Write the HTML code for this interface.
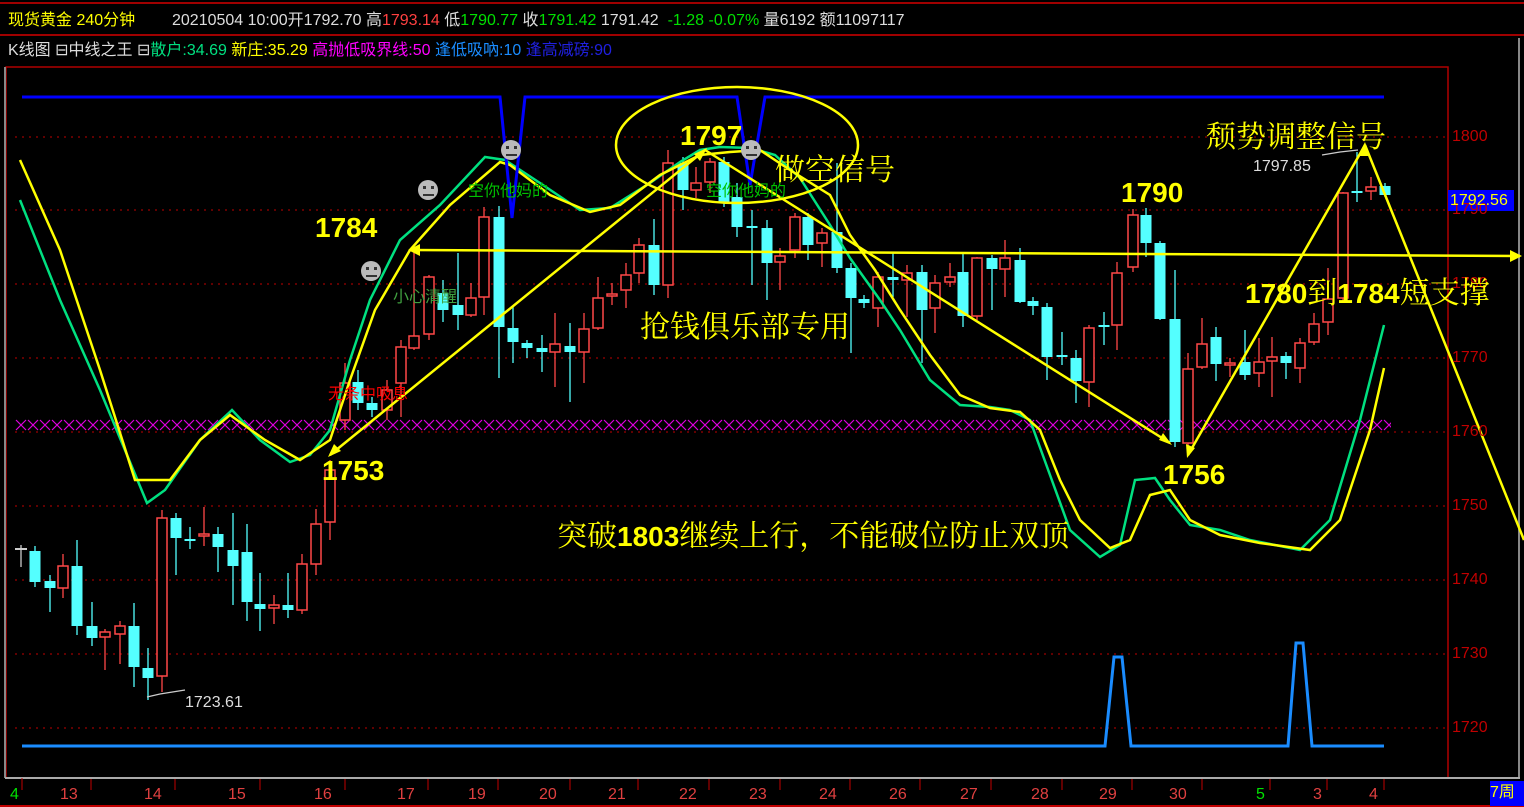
<!DOCTYPE html>
<html><head><meta charset="utf-8">
<style>
html,body{margin:0;padding:0;background:#000;}
body{width:1524px;height:807px;overflow:hidden;position:relative;font-family:"Liberation Sans","Noto Sans CJK SC",sans-serif;}
.h{position:absolute;font-size:16px;white-space:nowrap;line-height:18px;}
svg{position:absolute;left:0;top:0;}
.t{position:absolute;white-space:nowrap;color:#ffff00;}
.b{font-weight:bold;font-size:28px;font-family:"Liberation Sans",sans-serif;}
.s{font-size:30px;font-family:"Liberation Serif","Noto Serif CJK SC",serif;}
</style></head><body>
<svg width="1524" height="807" id="sv">
<rect x="0" y="0" width="1524" height="807" fill="#000"/>
<line x1="0" y1="3" x2="1524" y2="3" stroke="#a00000" stroke-width="2"/>
<line x1="0" y1="35" x2="1524" y2="35" stroke="#a00000" stroke-width="2"/>
<rect x="6" y="67" width="1442" height="711" fill="none" stroke="#b00000" stroke-width="1.5"/>
<line x1="5" y1="67" x2="5" y2="778" stroke="#888" stroke-width="2"/>
<line x1="1519" y1="38" x2="1519" y2="778" stroke="#888" stroke-width="2"/>
<line x1="5" y1="778" x2="1520" y2="778" stroke="#aaa" stroke-width="2"/>
<line x1="0" y1="806" x2="1524" y2="806" stroke="#c00000" stroke-width="2"/>
<g id="grid" stroke="#9a0000" stroke-width="1.3" stroke-dasharray="2,5"></g>
<defs><pattern id="xp" x="15" y="419" width="12" height="12" patternUnits="userSpaceOnUse"><path d="M1,1 L11,11 M11,1 L1,11" stroke="#e000e0" stroke-width="1.2"/></pattern></defs>
<rect x="15" y="419" width="1376" height="12" fill="url(#xp)"/>
<g id="cdl"></g>
<polyline fill="none" stroke="#00e080" stroke-width="2.5" points="20,200 60,300 100,390 147,503 165,490 200,440 232,410 260,440 290,462 310,455 330,430 350,360 370,300 400,240 440,205 485,157 505,160 540,183 580,210 610,208 650,183 680,162 700,150 720,147 750,148 775,155 800,178 830,225 850,258 880,300 900,330 930,380 960,405 990,407 1010,410 1030,420 1050,475 1070,530 1100,557 1120,545 1135,480 1155,478 1170,500 1190,525 1220,530 1250,540 1300,550 1330,520 1360,420 1384,325"/>
<polyline fill="none" stroke="#ffff00" stroke-width="2.5" points="20,160 60,250 100,370 135,480 170,480 200,440 230,415 265,440 300,460 330,440 350,380 375,310 410,250 450,205 500,162 510,165 550,195 590,212 620,205 660,175 700,155 730,152 760,150 790,170 830,195 850,235 875,270 900,310 930,355 960,395 990,408 1020,412 1040,430 1060,480 1080,520 1110,548 1130,540 1150,495 1170,490 1190,520 1220,535 1260,543 1310,550 1340,520 1370,430 1384,368"/>
<polyline fill="none" stroke="#0000ff" stroke-width="3" points="22,97 500,97 512,218 525,97 737,97 750,185 765,97 1384,97"/>
<polyline fill="none" stroke="#1a8cff" stroke-width="3" points="22,746 1105,746 1114,657 1122,657 1131,746 1288,746 1296,643 1303,643 1312,746 1384,746"/>
<g stroke="#ffff00" stroke-width="2.5" fill="none">
<line x1="410" y1="250" x2="1520" y2="256"/>
<line x1="330" y1="455" x2="705" y2="150"/>
<line x1="705" y1="150" x2="1170" y2="443"/>
<line x1="1188" y1="455" x2="1365" y2="145"/>
<line x1="1365" y1="145" x2="1524" y2="540"/>
<ellipse cx="737" cy="145" rx="121" ry="58"/>
</g>
<g fill="#ffff00">
<polygon points="408,250 420,244 420,256"/><polygon points="1522,256 1510,250 1510,262"/>
<polygon points="328,457 334,444 341,451"/><polygon points="707,148 694,154 700,161"/>
<polygon points="1172,445 1159,440 1163,433"/><polygon points="1187,458 1186,444 1195,448"/>
<polygon points="1365,142 1358,156 1370,156"/>
</g>
<polyline fill="none" stroke="#ccc" stroke-width="1.2" points="147,697 160,694 185,690"/>
<polyline fill="none" stroke="#ccc" stroke-width="1.2" points="1322,155 1340,152 1358,150"/>
<g fill="#bbb"><circle cx="428" cy="190" r="10"/><circle cx="371" cy="271" r="10"/><circle cx="511" cy="150" r="10"/><circle cx="751" cy="150" r="10"/></g>
<g fill="#333"><rect x="423" y="186" width="3" height="3"/><rect x="431" y="186" width="3" height="3"/><rect x="423" y="194" width="11" height="2"/>
<rect x="366" y="267" width="3" height="3"/><rect x="374" y="267" width="3" height="3"/><rect x="366" y="275" width="11" height="2"/>
<rect x="506" y="146" width="3" height="3"/><rect x="514" y="146" width="3" height="3"/><rect x="506" y="154" width="11" height="2"/>
<rect x="746" y="146" width="3" height="3"/><rect x="754" y="146" width="3" height="3"/><rect x="746" y="154" width="11" height="2"/></g>
<g stroke="#c00000" stroke-width="1"><line x1="22" y1="778" x2="22" y2="790"/></g>
<rect x="1448" y="190" width="66" height="21" fill="#0000ff"/>
<rect x="1490" y="781" width="34" height="25" fill="#0000ff"/>
</svg>

<div class="h" style="left:8px;top:12px;color:#ffff00">现货黄金 240分钟</div>
<div class="h" style="left:172px;top:12px;color:#ddd">20210504 10:00开1792.70 高<span style="color:#ff4040">1793.14</span> 低<span style="color:#00e000">1790.77</span> 收<span style="color:#00e000">1791.42</span> 1791.42 &nbsp;<span style="color:#00e000">-1.28 -0.07%</span> 量6192 额11097117</div>
<div class="h" style="left:8px;top:42px;color:#ddd">K线图 ⊟中线之王 ⊟<span style="color:#00e080">散户:34.69</span> <span style="color:#ffff00">新庄:35.29</span> <span style="color:#ff00ff">高抛低吸界线:50</span> <span style="color:#1a8cff">逢低吸吶:10</span> <span style="color:#2020e0">逢高减磅:90</span></div>

<div id="ax"></div>
<div class="h" style="left:1450px;top:192px;color:#ffff00;font-size:16px">1792.56</div>
<div class="h" style="left:1490px;top:784px;color:#ffff00;font-size:16px">7周</div>
<div class="h" style="left:185px;top:694px;color:#ddd;font-size:16px">1723.61</div>
<div class="h" style="left:1253px;top:158px;color:#ddd;font-size:16px">1797.85</div>
<div class="h" style="left:468px;top:183px;color:#00c000">空你他妈的</div>
<div class="h" style="left:706px;top:183px;color:#00c000">空你他妈的</div>
<div class="h" style="left:393px;top:289px;color:#40a040">小心清醒</div>
<div class="h" style="left:328px;top:386px;color:#ff0000">无条中吸息</div>

<div class="t b" style="left:315px;top:212px">1784</div>
<div class="t b" style="left:322px;top:455px">1753</div>
<div class="t b" style="left:680px;top:120px">1797</div>
<div class="t b" style="left:1121px;top:177px">1790</div>
<div class="t b" style="left:1163px;top:459px">1756</div>
<div class="t b" style="left:1245px;top:268px">1780<span style="font-family:'Liberation Serif','Noto Serif CJK SC',serif;font-weight:normal;font-size:30px">到</span>1784<span style="font-family:'Liberation Serif','Noto Serif CJK SC',serif;font-weight:normal;font-size:30px">短支撑</span></div>
<div class="t s" style="left:775px;top:145px">做空信号</div>
<div class="t s" style="left:1206px;top:112px">颓势调整信号</div>
<div class="t s" style="left:640px;top:302px">抢钱俱乐部专用</div>
<div class="t s" style="left:557px;top:511px">突破<b style="font-family:'Liberation Sans',sans-serif;font-size:28px">1803</b>继续上行，不能破位防止双顶</div>

<script>
var NS="http://www.w3.org/2000/svg",sv=document.getElementById('sv');
function el(g,n,a){var e=document.createElementNS(NS,n);for(var k in a)e.setAttribute(k,a[k]);g.appendChild(e);return e;}
var grid=document.getElementById('grid'),ax=document.getElementById('ax');
[[1800,137],[1790,210],[1780,284],[1770,358],[1760,432],[1750,506],[1740,580],[1730,654],[1720,728]].forEach(function(p){
 el(grid,'line',{x1:15,y1:p[1],x2:1447,y2:p[1]});
 var d=document.createElement('div');d.className='h';d.style.cssText='left:1452px;top:'+(p[1]-9)+'px;color:#c00000;font-size:16px';d.textContent=p[0];ax.appendChild(d);
});
var dates=[[14,'4','#00e000'],[69,'13'],[153,'14'],[237,'15'],[323,'16'],[406,'17'],[477,'19'],[548,'20'],[617,'21'],[688,'22'],[758,'23'],[828,'24'],[898,'26'],[969,'27'],[1040,'28'],[1108,'29'],[1178,'30'],[1260,'5','#00e000'],[1317,'3'],[1373,'4']];
var ticks=[7,31,60,89,118,147,171,195,219,243,268,292,316,341,365,389,413,437,461,485,500,529,554,578,602,627,651,676,700,725,749,773,798,822,846,871,895,919,944,968,992,1016,1041,1065,1089,1113,1133,1158,1182,1206,1231,1255,1269,1294,1318,1343,1367,1384];
var tx=[22,91,175,260,345,428,498,570,638,709,780,850,920,991,1062,1132,1202,1270,1327,1384];
tx.forEach(function(x){el(sv,'line',{x1:x,y1:779,x2:x,y2:790,stroke:'#c00000','stroke-width':1});});
dates.forEach(function(d){var e=document.createElement('div');e.className='h';e.style.cssText='left:'+(d[0]-(d[1].length>1?9:4))+'px;top:786px;font-size:16px;color:'+(d[2]||'#e04040');e.textContent=d[1];ax.appendChild(e);});
var C=[[21,549,551,545,567,'w'],[35,551,582,546,587,'c'],[50,581,588,575,612,'c'],[63,566,588,554,598,'r'],[77,566,626,540,635,'c'],[92,626,638,602,646,'c'],[105,632,637,629,670,'r'],[120,626,634,621,664,'r'],[134,626,667,603,687,'c'],[148,668,678,648,700,'c'],[162,518,676,510,692,'r'],[176,518,538,513,575,'c'],[190,539,541,527,549,'c'],[204,534,536,507,546,'r'],[218,534,547,527,572,'c'],[233,550,566,513,605,'c'],[247,552,602,524,621,'c'],[260,604,609,573,631,'c'],[274,605,608,595,624,'r'],[288,605,610,573,618,'c'],[302,564,610,554,614,'r'],[316,524,564,509,575,'r'],[330,470,522,460,540,'r'],[345,383,420,363,430,'r'],[358,382,403,370,410,'c'],[372,403,410,397,417,'c'],[387,390,410,380,420,'r'],[401,347,383,340,417,'r'],[414,336,348,250,350,'r'],[429,277,334,275,340,'r'],[443,293,310,280,322,'c'],[458,305,315,253,330,'c'],[471,298,315,283,317,'r'],[484,217,297,207,315,'r'],[499,217,327,206,378,'c'],[513,328,342,307,363,'c'],[527,343,348,340,358,'c'],[542,348,352,335,372,'c'],[555,344,352,313,387,'r'],[570,346,352,323,402,'c'],[584,329,352,313,383,'r'],[598,298,328,277,330,'r'],[612,294,296,283,305,'r'],[626,275,290,263,308,'r'],[639,245,273,238,283,'r'],[654,245,285,219,295,'c'],[668,163,285,150,298,'r'],[683,163,190,157,210,'c'],[696,183,190,167,198,'r'],[710,162,182,158,193,'r'],[724,162,202,157,207,'c'],[737,197,227,183,237,'c'],[752,226,228,210,285,'c'],[767,228,263,220,300,'c'],[780,256,262,248,290,'r'],[795,217,250,213,258,'r'],[808,217,245,213,260,'c'],[822,233,243,228,267,'r'],[837,232,268,163,273,'c'],[851,268,298,263,353,'c'],[864,299,303,295,308,'c'],[878,277,308,272,327,'r'],[893,277,280,253,297,'c'],[907,273,280,265,317,'r'],[922,272,310,265,363,'c'],[935,283,308,275,333,'r'],[950,277,282,263,287,'r'],[963,272,316,252,327,'c'],[977,258,316,257,320,'r'],[992,258,269,255,310,'c'],[1005,258,269,240,297,'r'],[1020,260,302,248,303,'c'],[1033,301,306,297,315,'c'],[1047,307,357,303,380,'c'],[1062,355,357,332,365,'c'],[1076,358,381,350,403,'c'],[1089,328,382,325,407,'r'],[1104,325,327,312,345,'c'],[1117,273,325,262,350,'r'],[1133,215,267,209,272,'r'],[1146,215,243,208,257,'c'],[1160,243,319,241,320,'c'],[1175,319,442,270,447,'c'],[1188,369,443,353,453,'r'],[1202,344,367,318,369,'r'],[1216,337,364,327,381,'c'],[1230,363,365,358,377,'r'],[1245,362,375,330,380,'c'],[1259,362,373,338,387,'r'],[1272,357,361,337,397,'r'],[1286,356,363,352,379,'c'],[1300,343,368,338,383,'r'],[1314,324,342,313,345,'r'],[1328,299,322,268,335,'r'],[1343,193,298,192,303,'r'],[1357,191,193,152,202,'c'],[1371,187,191,177,200,'r'],[1385,186,195,183,197,'c']];
var g=document.getElementById('cdl');
C.forEach(function(c){var x=c[0],t=c[5];var col=t=='r'?'#ff4848':(t=='c'?'#54ffff':'#ccc');
 el(g,'line',{x1:x,y1:c[3],x2:x,y2:c[4],stroke:col,'stroke-width':1.3});
 var h=Math.max(c[2]-c[1],2);
 if(t=='r')el(g,'rect',{x:x-5,y:c[1],width:10,height:h,fill:'#000',stroke:col,'stroke-width':1.5});
 else if(t=='c')el(g,'rect',{x:x-5.5,y:c[1],width:11,height:h,fill:col});
 else el(g,'line',{x1:x-6,y1:c[1],x2:x+6,y2:c[1],stroke:col,'stroke-width':2});
});
</script>
</body></html>
